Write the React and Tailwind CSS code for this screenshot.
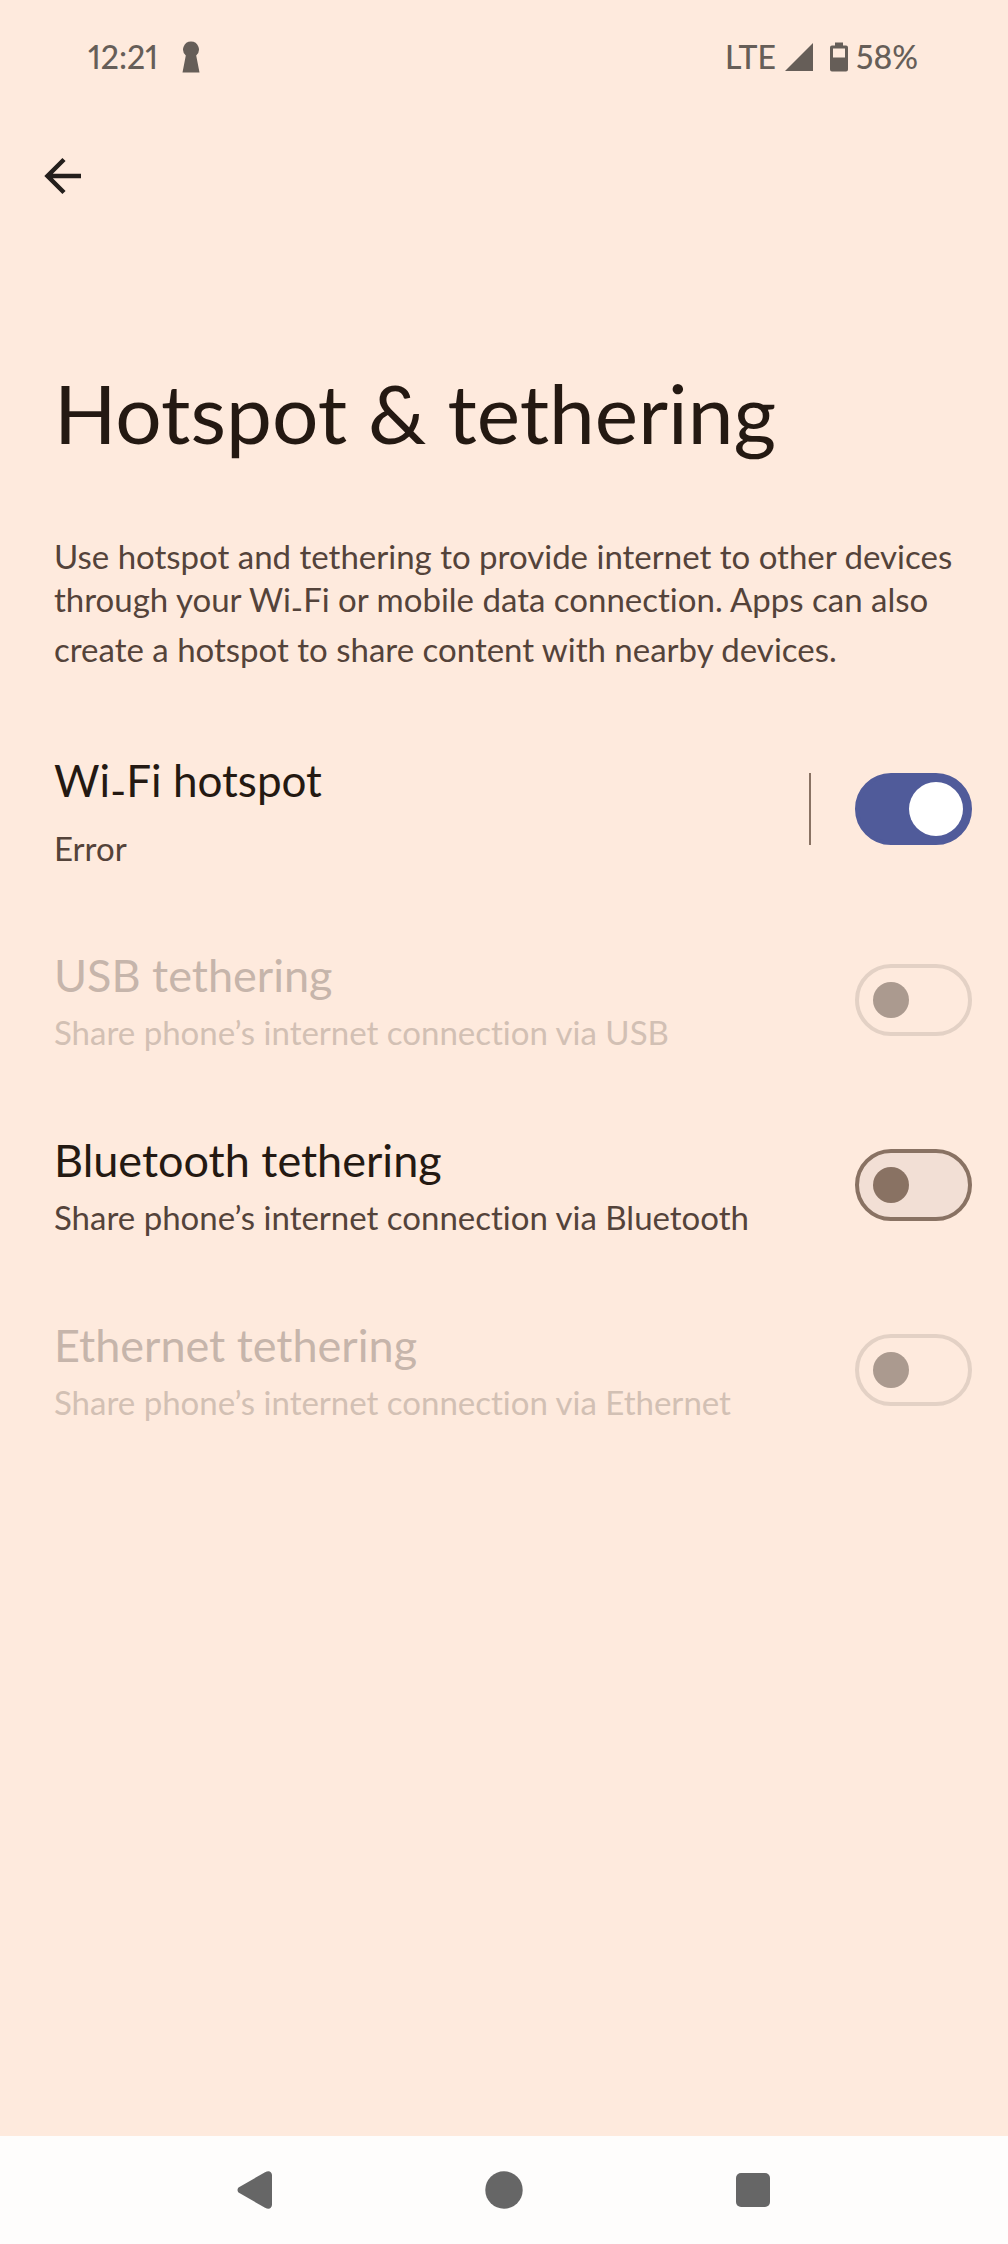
import { useState } from "react";

const ITEMS = [
  {
    id: "usb",
    title: "USB tethering",
    summary: "Share phone’s internet connection via USB",
    disabled: true,
  },
  {
    id: "bluetooth",
    title: "Bluetooth tethering",
    summary: "Share phone’s internet connection via Bluetooth",
    disabled: false,
  },
  {
    id: "ethernet",
    title: "Ethernet tethering",
    summary: "Share phone’s internet connection via Ethernet",
    disabled: true,
  },
];

function StatusBar() {
  return (
    <header className="flex h-[114px] items-center justify-between pr-[90px] pl-22 text-[32px] font-medium proportional-nums text-[#665e58]">
      <div className="flex items-center gap-6">
        <span>12:21</span>
        <svg width="18" height="32" viewBox="0 0 18 32" fill="currentColor" aria-hidden="true">
          <path d="M9 0.5a8 8 0 0 1 5.200 14L17.500 31.500H0.500L3.800 14.500A8 8 0 0 1 9 0.500z" />
        </svg>
      </div>
      <div className="flex items-center">
        <span>LTE</span>
        <svg className="ml-2" width="30" height="30" viewBox="0 0 30 30" fill="currentColor" aria-hidden="true">
          <path d="M29 1v28H1z" />
        </svg>
        <svg className="mr-2 ml-4" width="18" height="30" viewBox="0 0 18 30" fill="currentColor" aria-hidden="true">
          <path
            fillRule="evenodd"
            d="M5 0.5h8v3h3a2 2 0 0 1 2 2V27.5a2 2 0 0 1-2 2H2a2 2 0 0 1-2-2V5.500a2 2 0 0 1 2-2h3zM3 6.500v9h12v-9z"
          />
        </svg>
        <span>58%</span>
      </div>
    </header>
  );
}

// The hyphen sits low, close to the baseline
function WiFi() {
  return (
    <>
      Wi<span className="inline-block pb-1 align-sub leading-none">‑</span>Fi
    </>
  );
}

function Switch({ id, labelledBy, checked, disabled, onChange }) {
  return (
    <input
      id={id}
      type="checkbox"
      role="switch"
      aria-labelledby={labelledBy}
      checked={checked}
      disabled={disabled}
      onChange={onChange}
      className="flex h-18 w-[117px] shrink-0 appearance-none items-center rounded-full border-4 border-[#897263] bg-[#f2dfd5] px-3.5 before:size-9 before:rounded-full before:bg-[#897263] checked:justify-end checked:border-[#505b9a] checked:bg-[#505b9a] checked:px-[5px] checked:before:size-[54px] checked:before:bg-white disabled:border-[#e3d1c5] disabled:bg-transparent disabled:before:bg-[#ab9a8f]"
    />
  );
}

function SettingRow({ item, checked, onChange }) {
  return (
    <li className="flex h-[185px] items-center justify-between">
      <label htmlFor={item.id}>
        <span className={`block text-[45px] leading-16 ${item.disabled ? "text-[#c6b5ab]" : "text-[#241912]"}`}>
          {item.title}
        </span>
        <span className={`block text-[33px] leading-[50px] ${item.disabled ? "text-[#d2c0b4]" : "text-[#54433a]"}`}>
          {item.summary}
        </span>
      </label>
      <Switch id={item.id} checked={checked} disabled={item.disabled} onChange={onChange} />
    </li>
  );
}

export default function App() {
  const [enabled, setEnabled] = useState({ wifi: true }); // Which switches are on

  const toggle = (id) => setEnabled((prev) => ({ ...prev, [id]: !prev[id] }));

  return (
    <div className="flex min-h-screen flex-col bg-[#feeadd] font-['Lato',sans-serif] [font-variant-ligatures:none]">
      <StatusBar />

      <main className="flex-1">
        <button type="button" aria-label="Back" className="mt-[30px] ml-8 flex size-16 items-center pl-3 text-[#241f1c]">
          <svg width="38" height="38" viewBox="0 0 38 38" fill="none" stroke="currentColor" strokeWidth="4.5" aria-hidden="true">
            <path d="M37 19H4M20 2.500L3.500 19L20 35.500" />
          </svg>
        </button>

        <div className="pr-9 pl-[54px]">
          <h1 className="mt-39 text-[82px] leading-24 text-[#241912]">Hotspot &amp; tethering</h1>
          <p className="mt-[75px] text-[33px] leading-[43px] text-[#54433a]">
            Use hotspot and tethering to provide internet to other devices through your <WiFi /> or mobile data
            connection. Apps can also create a hotspot to share content with nearby devices.
          </p>

          <ul className="mt-10">
            <li className="flex h-[197px] items-center justify-between">
              <a href="#wifi" className="flex-1 pt-3.5">
                <span id="wifi-title" className="block text-[44px] leading-[56px] text-[#241912]">
                  <WiFi /> hotspot
                </span>
                <span className="block text-[33px] leading-16 text-[#54433a]">Error</span>
              </a>
              <div className="border-l-2 border-[#897263] pl-11">
                <Switch
                  id="wifi"
                  labelledBy="wifi-title"
                  checked={enabled.wifi}
                  onChange={() => toggle("wifi")}
                />
              </div>
            </li>
            {ITEMS.map((item) => (
              <SettingRow
                key={item.id}
                item={item}
                checked={!!enabled[item.id]}
                onChange={() => toggle(item.id)}
              />
            ))}
          </ul>
        </div>
      </main>

      <nav className="flex h-27 items-center justify-center gap-[212px] bg-[#fefdfc] text-[#666666]">
        <button type="button" aria-label="Back">
          <svg width="36" height="38" viewBox="0 0 36 38" fill="currentColor" aria-hidden="true">
            <path d="M1.500 16.500L28 1.200Q34 -1.500 35 4V34Q34 39.500 28 36.800L1.500 21.500Q-0.500 19 1.500 16.500z" />
          </svg>
        </button>
        <button type="button" aria-label="Home">
          <svg width="38" height="38" viewBox="0 0 38 38" fill="currentColor" aria-hidden="true">
            <circle cx="19" cy="19" r="18.700" />
          </svg>
        </button>
        <button type="button" aria-label="Recents">
          <svg width="36" height="36" viewBox="0 0 36 36" fill="currentColor" aria-hidden="true">
            <rect x="1" y="1" width="34" height="34" rx="5" />
          </svg>
        </button>
      </nav>
    </div>
  );
}
